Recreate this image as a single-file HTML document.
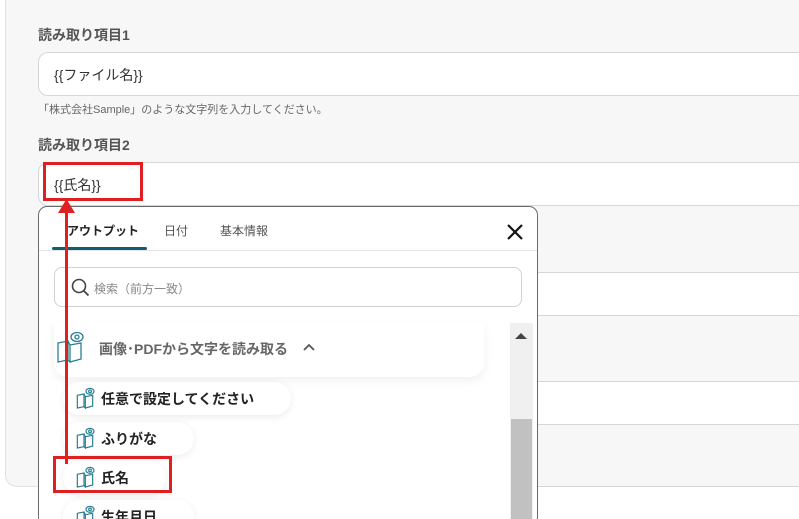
<!DOCTYPE html>
<html style="width:799px;height:519px;overflow:hidden"><head><meta charset="utf-8"><style>
*{box-sizing:border-box;margin:0;padding:0}
body{width:799px;height:519px;overflow:hidden;background:#fff;font-family:"Liberation Sans","Noto Sans CJK JP",sans-serif;position:relative}
.abs{position:absolute}
.cont{left:5px;top:-20px;width:820px;height:507px;background:#f7f7f8;border:1px solid #e2e2e4;border-radius:12px}
.lbl{font-size:14px;font-weight:bold;color:#555}
.inp{left:38px;width:800px;height:44px;background:#fff;border:1px solid #d4d6da;border-radius:10px;font-size:14px;color:#333;padding:12px 0 0 15px}
.dd{left:38px;top:206px;width:500px;height:320px;background:#fff;border:1.5px solid #6a6a6a;border-radius:9px;overflow:hidden}
.pill{background:#fff;border-radius:17px;box-shadow:0 2px 8px rgba(0,0,0,.08);font-size:14px;font-weight:bold;color:#222;height:33px;padding:7px 0 0 38px}
.red{border:3px solid #e02020}
</style></head><body>
<div class="abs cont"></div>
<div class="abs lbl" style="left:38px;top:25px">読み取り項目1</div>
<div class="abs inp" style="top:52px">{{ファイル名}}</div>
<div class="abs" style="left:38px;top:101px;font-size:11px;color:#666">「株式会社Sample」のような文字列を入力してください。</div>
<div class="abs lbl" style="left:38px;top:135px">読み取り項目2</div>
<div class="abs inp" style="top:162px">{{氏名}}</div>
<div class="abs inp" style="top:272px;height:44px"></div>
<div class="abs inp" style="top:381px;height:44px"></div>
<div class="abs" style="left:520px;top:486px;width:300px;border-top:1px solid #d4d6da"></div>

<div class="abs dd">
  <div class="abs" style="left:28px;top:15px;font-size:12px;font-weight:bold;color:#222">アウトプット</div>
  <div class="abs" style="left:125px;top:15px;font-size:12px;color:#555">日付</div>
  <div class="abs" style="left:181px;top:15px;font-size:12px;color:#555">基本情報</div>
  <div class="abs" style="left:13px;top:40px;width:95px;height:3px;background:#0e6070;border-radius:2px"></div>
  <div class="abs" style="left:0;top:43px;width:500px;border-top:1px solid #e4e4e4"></div>
  <svg class="abs" style="left:467px;top:16px" width="18" height="18" viewBox="0 0 18 18"><path d="M2 2L16 16M16 2L2 16" stroke="#111" stroke-width="2.2"/></svg>
  <div class="abs" style="left:15px;top:60px;width:468px;height:40px;border:1px solid #cfd2d6;border-radius:8px"></div>
  <svg class="abs" style="left:32px;top:71px" width="19" height="19" viewBox="0 0 19 19"><circle cx="8" cy="8" r="6.5" fill="none" stroke="#444" stroke-width="1.6"/><path d="M12.7 12.7L17.5 17.5" stroke="#444" stroke-width="1.8"/></svg>
  <div class="abs" style="left:55px;top:73px;font-size:12px;color:#888">検索（前方一致）</div>
  <div class="abs" style="left:0;top:115px;width:475px;height:214px;background:#fff"></div>
  <div class="abs" style="left:15px;top:115px;width:430px;height:55px;background:#fff;border-radius:0 0 14px 14px;box-shadow:0 4px 10px rgba(0,0,0,.06)"></div>
  <svg class="abs" style="left:17px;top:124px" width="30" height="32" viewBox="0 0 30 32"><g fill="none" stroke="#2a7f93" stroke-width="1.3"><path d="M2 12L12 10V29L2 31Z"/><path d="M12 10L14 14V31L12 29"/><path d="M14 14L25 12V28L14 31"/><ellipse cx="21" cy="6" rx="6" ry="4.5"/><circle cx="21" cy="6" r="2"/></g></svg>
  <div class="abs" style="left:60px;top:132px;font-size:14px;font-weight:bold;color:#666">画像･PDFから文字を読み取る</div>
  <svg class="abs" style="left:264px;top:136px" width="12" height="10" viewBox="0 0 12 10"><path d="M1 7L6 2L11 7" fill="none" stroke="#555" stroke-width="1.8"/></svg>
  <div class="abs pill" style="left:24px;top:175px;width:228px">任意で設定してください</div>
  <div class="abs pill" style="left:24px;top:215px;width:131px">ふりがな</div>
  <div class="abs pill" style="left:24px;top:254px;width:103px">氏名</div>
  <div class="abs pill" style="left:24px;top:293px;width:131px">生年月日</div>
  <svg class="abs" style="left:37px;top:180px" width="20" height="22" viewBox="0 0 30 32"><g fill="none" stroke="#2a7f93" stroke-width="1.8"><path d="M2 12L12 10V29L2 31Z"/><path d="M12 10L14 14V31L12 29"/><path d="M14 14L25 12V28L14 31"/><ellipse cx="21" cy="6" rx="6" ry="4.5"/><circle cx="21" cy="6" r="2"/></g></svg>
  <svg class="abs" style="left:37px;top:220px" width="20" height="22" viewBox="0 0 30 32"><g fill="none" stroke="#2a7f93" stroke-width="1.8"><path d="M2 12L12 10V29L2 31Z"/><path d="M12 10L14 14V31L12 29"/><path d="M14 14L25 12V28L14 31"/><ellipse cx="21" cy="6" rx="6" ry="4.5"/><circle cx="21" cy="6" r="2"/></g></svg>
  <svg class="abs" style="left:37px;top:259px" width="20" height="22" viewBox="0 0 30 32"><g fill="none" stroke="#2a7f93" stroke-width="1.8"><path d="M2 12L12 10V29L2 31Z"/><path d="M12 10L14 14V31L12 29"/><path d="M14 14L25 12V28L14 31"/><ellipse cx="21" cy="6" rx="6" ry="4.5"/><circle cx="21" cy="6" r="2"/></g></svg>
  <svg class="abs" style="left:37px;top:298px" width="20" height="22" viewBox="0 0 30 32"><g fill="none" stroke="#2a7f93" stroke-width="1.8"><path d="M2 12L12 10V29L2 31Z"/><path d="M12 10L14 14V31L12 29"/><path d="M14 14L25 12V28L14 31"/><ellipse cx="21" cy="6" rx="6" ry="4.5"/><circle cx="21" cy="6" r="2"/></g></svg>
  <div class="abs" style="left:471px;top:116px;width:23px;height:214px;background:#f0f0f0"></div>
  <div class="abs" style="left:472px;top:212px;width:21px;height:120px;background:#c1c1c1"></div>
  <svg class="abs" style="left:476px;top:125px" width="12" height="8" viewBox="0 0 12 8"><path d="M0 7L6 1L12 7Z" fill="#444"/></svg>
</div>

<div class="abs red" style="left:43px;top:162px;width:100px;height:39px"></div>
<div class="abs red" style="left:53px;top:456px;width:119px;height:37px"></div>
<div class="abs" style="left:65px;top:210px;width:3px;height:254px;background:#e02020"></div>
<svg class="abs" style="left:58px;top:199px" width="17" height="14" viewBox="0 0 17 14"><path d="M8.5 0L17 14H0Z" fill="#e02020"/></svg>
</body></html>
